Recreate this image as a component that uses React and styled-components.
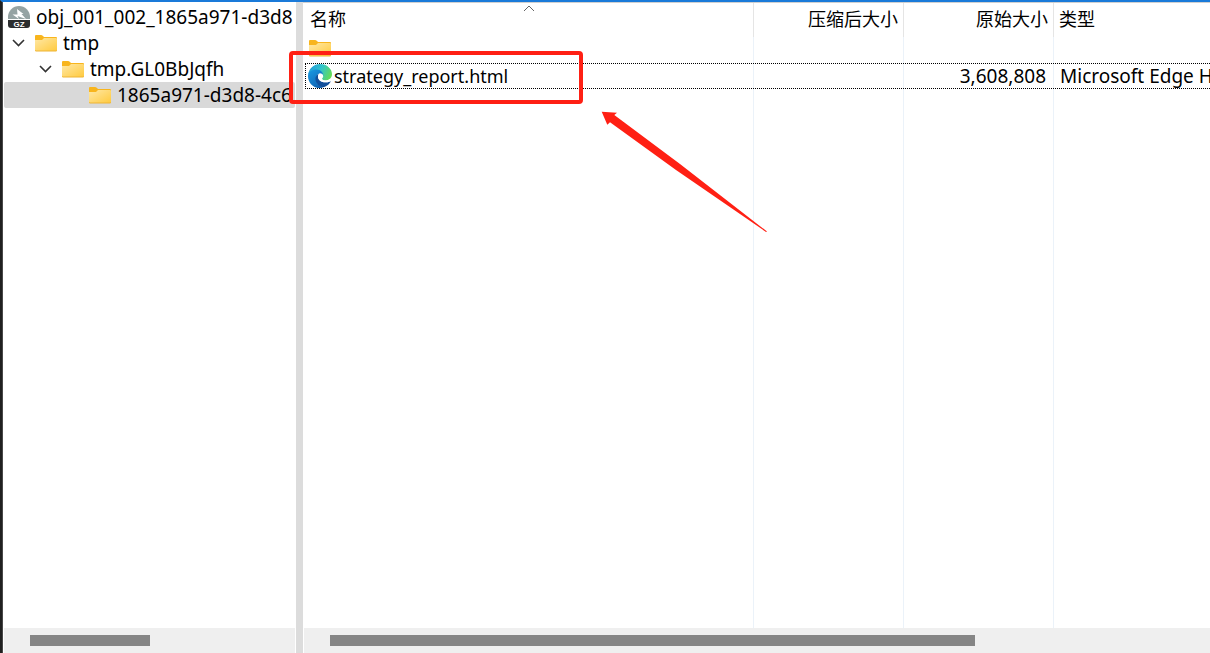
import React, { useState } from "react";
import styled, { createGlobalStyle } from "styled-components";

const GlobalStyle = createGlobalStyle`
  * { box-sizing: border-box; }
  body {
    margin: 0;
    background: #fff;
    color: #000;
    font-family: "Noto Sans", "Noto Sans CJK SC", sans-serif;
    font-size: 18px;
    line-height: 26px;
  }
`;

const Window = styled.main`
  display: flex;
  height: 100vh;
  overflow: hidden;
  border-top: 2px solid #1a7ad9;
  border-left: 2px solid #202020;
`;

const Edge = styled.div`
  flex: 0 0 1px;
  background: #484848;
`;

const TreePane = styled.nav`
  flex: 0 0 293px;
  min-width: 0;
  padding: 0 1px;
  display: flex;
  flex-direction: column;
`;

const Splitter = styled.div`
  flex: 0 0 7px;
  background: #dcdcdc;
`;

const ListPane = styled.section`
  position: relative;
  flex: 1;
  min-width: 0;
  display: flex;
  flex-direction: column;
  border-top: 1px solid #d0d0d0;
`;

const Tree = styled.ul`
  flex: 1;
  min-height: 0;
  margin: 0;
  padding: 2px 0 0;
  list-style: none;
  overflow: hidden;
  font-size: 19px;
`;

const TreeRow = styled.li`
  display: flex;
  align-items: center;
  height: 26px;
  padding-left: ${(p) => p.$indent}px;
  overflow: hidden;
  white-space: nowrap;
  border-radius: 2px;
  background: ${(p) => (p.$selected ? "#d9d9d9" : "transparent")};

  > svg { flex: none; }
`;

const TreeLabel = styled.span`
  padding-left: 6px;
`;

const Expander = styled.button`
  flex: none;
  display: flex;
  align-items: center;
  width: 23px;
  height: 26px;
  padding: 0;
  border: 0;
  background: none;
`;

const ExpanderSpace = styled.span`
  flex: 0 0 23px;
`;

const ScrollTrack = styled.div`
  flex: 0 0 25px;
  padding: 7px 26px 0;
  margin-left: ${(p) => p.$inset || 0}px;
  background: #efefef;
`;

const ScrollThumb = styled.div`
  width: ${(p) => p.$size};
  height: 11px;
  background: #858585;
`;

const TableArea = styled.div`
  flex: 1;
  min-height: 0;
  padding-left: 2px;
  overflow: hidden;
`;

const FileTable = styled.table`
  width: calc(100% + 80px);
  height: 100%;
  table-layout: fixed;
  border-collapse: separate;
  border-spacing: 0;
`;

const Column = styled.col`
  width: ${(p) => p.$width};
`;

const HeaderCell = styled.th`
  position: relative;
  height: 34px;
  padding: 0 5px 2px;
  font-weight: 400;
  text-align: ${(p) => p.$align || "left"};
  white-space: nowrap;
  border-right: 1px solid #e5e5e5;

  &:last-child { border-right: 0; }
`;

const SortMark = styled.svg`
  position: absolute;
  top: 2px;
  left: 50%;
  margin-left: -6px;
`;

const FileRow = styled.tr`
  height: ${(p) => (p.$filler ? "auto" : "26px")};
  outline: ${(p) => (p.$focused ? "1px dotted #000" : "none")};
  outline-offset: -1px;
`;

const Cell = styled.td`
  height: inherit;
  padding: 0 7px 0 6px;
  overflow: hidden;
  white-space: nowrap;
  font-size: 19px;
  text-align: ${(p) => p.$align || "left"};
  border-right: 1px solid #ebf2f9;

  &:last-child { border-right: 0; }
`;

const NameCell = styled(Cell)`
  padding: 0 3px;
  font-size: 18px;
`;

const FileName = styled.span`
  display: flex;
  align-items: center;
  gap: 2px;
  height: 26px;
`;

const ParentFolder = styled(FileName)`
  align-items: flex-start;
  padding: 2px 1px 0;
`;

const Highlight = styled.div`
  position: absolute;
  top: 48px;
  left: -14px;
  width: 294px;
  height: 53px;
  border: 4px solid #ff2014;
  border-radius: 4px;
  pointer-events: none;
`;

const Arrow = styled.svg`
  position: absolute;
  top: 107px;
  left: 297px;
  pointer-events: none;
`;

function FolderIcon({ id }) {
  return (
    <svg width="22" height="18" viewBox="0 0 22 18" aria-hidden="true">
      <defs>
        <linearGradient id={id} x1="0" y1="0" x2="1" y2="1">
          <stop offset="0" stopColor="#ffe8a6" />
          <stop offset="1" stopColor="#ffca3e" />
        </linearGradient>
      </defs>
      <path d="M0 2Q0 1 1 1H6Q7 1 8 2L9 3H21Q22 3 22 4V8H0Z" fill="#f8b51d" />
      <path d="M0 6H7L9 4H21Q22 4 22 5V16Q22 17 21 17H1Q0 17 0 16Z" fill={`url(#${id})`} />
      <path d="M0 16Q0 17 1 17H21Q22 17 22 16" fill="none" stroke="#eeb434" strokeWidth="1" />
    </svg>
  );
}

function ArchiveIcon() {
  return (
    <svg width="22" height="22" viewBox="0 0 22 22" role="img" aria-label="GZ">
      <path d="M0 13V11A11 11 0 0 1 22 11V13Z" fill="#95a3a3" />
      <path d="M9 3L15.500 8H13.500L18 13L9.500 10L11 13L4.500 8.500H9.500Z" fill="#fff" />
      <path d="M0 14H22V19Q22 22 19 22H3Q0 22 0 19Z" fill="#2b2d2e" />
      <text x="11" y="21" textAnchor="middle" fill="#fff" fontFamily="Liberation Sans, sans-serif" fontSize="8" fontWeight="700">GZ</text>
    </svg>
  );
}

function EdgeIcon() {
  return (
    <svg width="24" height="24" viewBox="0 0 24 24" aria-hidden="true">
      <defs>
        <linearGradient id="edge-top" x1="0" y1="0.3" x2="1" y2="0.6">
          <stop offset="0" stopColor="#229bdc" />
          <stop offset="0.5" stopColor="#32c4cb" />
          <stop offset="1" stopColor="#66dc55" />
        </linearGradient>
        <linearGradient id="edge-side" x1="0" y1="0" x2="0.6" y2="1">
          <stop offset="0" stopColor="#199be4" />
          <stop offset="1" stopColor="#1065b5" />
        </linearGradient>
      </defs>
      <path d="M0 11C1 4 6 0 12 0C19 0 24 5 24 10C24 14 21 16.500 18 16.500C15 16.500 13.500 15.500 14 14.500C16 12 14.500 7 9 7C4.500 7 1 9 0 11Z" fill="url(#edge-top)" />
      <path d="M0 12C0 8 4 5.500 8.500 5.500C13 5.500 15.500 9 15.300 12C14.500 10 12 9 10.500 10C7 12 7 20 15 23.500C8 26 0 20.500 0 12Z" fill="url(#edge-side)" />
      <path d="M11 10C7.500 11 6.500 15 8.500 18.500C11 23 15 24 17 22.800C19.500 21.700 21.500 19.800 22.500 18C22.700 17.400 22.200 17.200 21.700 17.500C17 19.500 10 18 10 12.500C10 11.300 10.500 10.500 11 10Z" fill="#124f9b" />
      <path d="M11 10C13.500 8.500 15.500 10.500 15.200 12.500C14.500 14 13.500 14.500 14.500 15.500C16 17 20 16.800 22.500 14.500L22 17.400C17 19.500 10 18 10 12.500C10 11.300 10.500 10.500 11 10Z" fill="#fff" />
    </svg>
  );
}

function Chevron() {
  return (
    <svg width="13" height="8" viewBox="0 0 13 8" aria-hidden="true">
      <path d="M1 1L6.500 6.500L12 1" fill="none" stroke="#333" strokeWidth="1.600" />
    </svg>
  );
}

const folders = [
  { name: "tmp", indent: 8, expandable: true },
  { name: "tmp.GL0BbJqfh", indent: 35, expandable: true },
  { name: "1865a971-d3d8-4c6", indent: 62 },
];

export default function App() {
  const [selected, setSelected] = useState("1865a971-d3d8-4c6");

  return (
    <>
      <GlobalStyle />
      <Window>
        <Edge />
        <TreePane aria-label="Folders">
          <Tree>
            <TreeRow $indent={4}>
              <ArchiveIcon />
              <TreeLabel>obj_001_002_1865a971-d3d8</TreeLabel>
            </TreeRow>
            {folders.map((folder, index) => (
              <TreeRow
                key={folder.name}
                $indent={folder.indent}
                $selected={selected === folder.name}
                onClick={() => setSelected(folder.name)}
              >
                {folder.expandable ? (
                  <Expander type="button" aria-label={`Collapse ${folder.name}`}>
                    <Chevron />
                  </Expander>
                ) : (
                  <ExpanderSpace />
                )}
                <FolderIcon id={`tree-folder-${index}`} />
                <TreeLabel>{folder.name}</TreeLabel>
              </TreeRow>
            ))}
          </Tree>
          <ScrollTrack>
            <ScrollThumb $size="50%" />
          </ScrollTrack>
        </TreePane>
        <Splitter />
        <ListPane aria-label="Files">
          <TableArea>
            <FileTable>
              <colgroup>
                <Column $width="449px" />
                <Column $width="150px" />
                <Column $width="150px" />
                <Column $width="auto" />
              </colgroup>
              <thead>
                <tr>
                  <HeaderCell>
                    名称
                    <SortMark width="12" height="7" viewBox="0 0 12 7" aria-hidden="true">
                      <path d="M1 6L6 1L11 6" fill="none" stroke="#666" />
                    </SortMark>
                  </HeaderCell>
                  <HeaderCell $align="right">压缩后大小</HeaderCell>
                  <HeaderCell $align="right">原始大小</HeaderCell>
                  <HeaderCell>类型</HeaderCell>
                </tr>
              </thead>
              <tbody>
                <FileRow>
                  <NameCell>
                    <ParentFolder><FolderIcon id="parent-folder" /></ParentFolder>
                  </NameCell>
                  <Cell />
                  <Cell />
                  <Cell />
                </FileRow>
                <FileRow $focused>
                  <NameCell>
                    <FileName><EdgeIcon />strategy_report.html</FileName>
                  </NameCell>
                  <Cell />
                  <Cell $align="right">3,608,808</Cell>
                  <Cell>Microsoft Edge H</Cell>
                </FileRow>
                <FileRow $filler>
                  <Cell />
                  <Cell />
                  <Cell />
                  <Cell />
                </FileRow>
              </tbody>
            </FileTable>
          </TableArea>
          <ScrollTrack $inset={1}>
            <ScrollThumb $size="75.500%" />
          </ScrollTrack>
          <Highlight />
          <Arrow width="168" height="124" viewBox="0 0 168 124" aria-hidden="true">
            <path d="M1.700 1.700L17 2.700L14.300 5L80 54L167 121.500L166 122L76 60L10 12.300L7.300 14.700Z" fill="#ff2014" />
          </Arrow>
        </ListPane>
      </Window>
    </>
  );
}
